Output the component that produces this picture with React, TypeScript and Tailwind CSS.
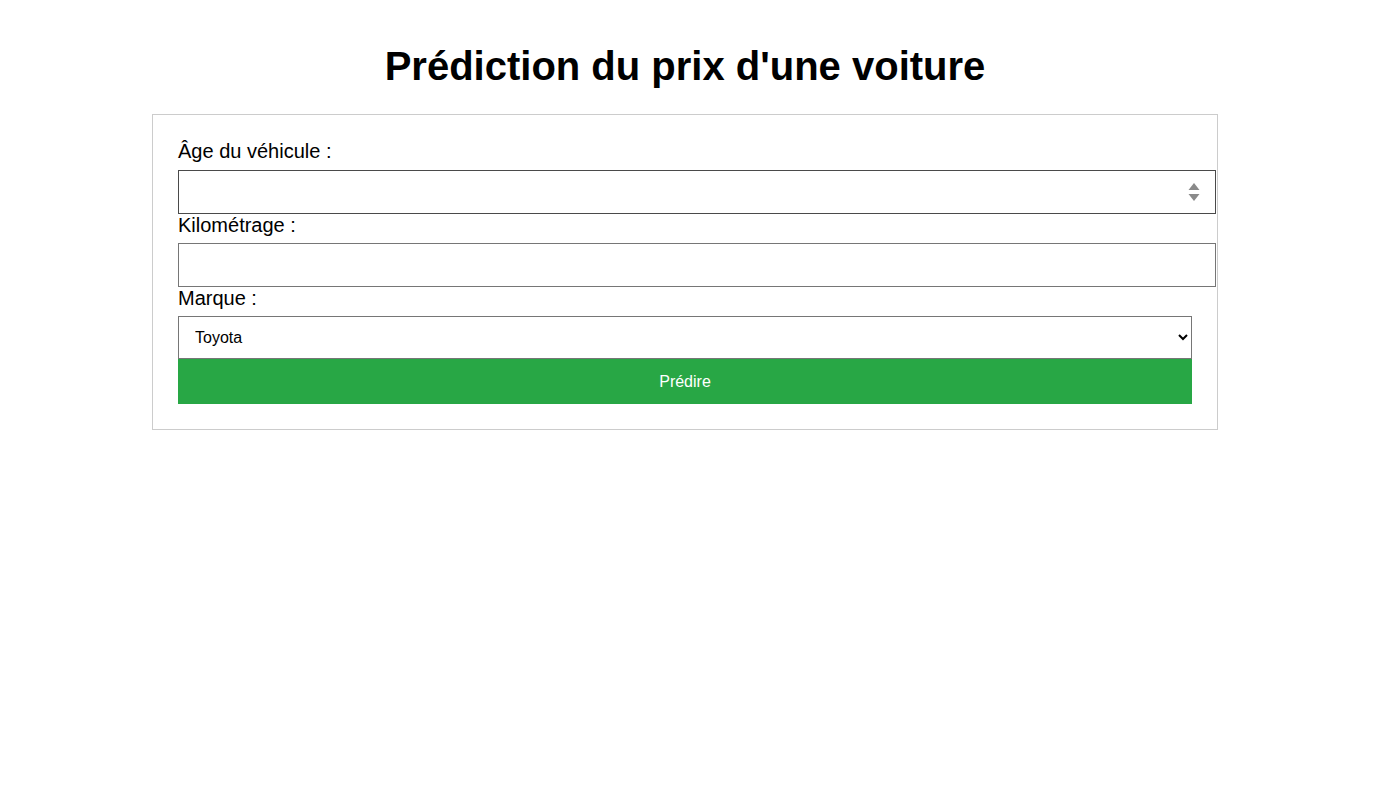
import React from "react";

const SpinArrows = () => (
  <svg viewBox="0 0 12 20" className="w-[12px] h-[20px]" fill="#8a8a8a">
    <path d="M6 1 L11.5 8 H0.5 Z" />
    <path d="M6 19 L11.5 12 H0.5 Z" />
  </svg>
);

const App = () => {
  return (
    <div className="min-h-screen bg-white text-black font-['Liberation_Sans',Arial,sans-serif]">
      <div className="w-[1370px] pt-[20px]">
        <h1 className="text-center text-[40px] leading-[46px] font-bold mt-[23px] mb-[25px]">
          Prédiction du prix d'une voiture
        </h1>

        {/* Form card */}
        <form className="w-[1066px] mx-auto border border-[#cccccc] p-[25px]">
          <label className="block text-[20px] leading-[23px]">Âge du véhicule :</label>
          <div className="relative mt-[7px] w-[1038px]">
            <input
              type="text"
              className="block w-full h-[44px] border border-[#4a4a4a] bg-white px-[11px] text-[16px] outline-none"
            />
            <div className="absolute right-[16px] top-[12px]">
              <SpinArrows />
            </div>
          </div>

          <label className="block text-[20px] leading-[23px]">Kilométrage :</label>
          <input
            type="text"
            className="block mt-[6px] w-[1038px] h-[44px] border border-[#767676] bg-white px-[11px] text-[16px] outline-none"
          />

          <label className="block text-[20px] leading-[23px]">Marque :</label>
          <select
            defaultValue="Toyota"
            className="block mt-[6px] w-full h-[43px] border border-[#767676] bg-white pl-[12px] pr-[8px] text-[16px] outline-none appearance-auto"
          >
            <option>Toyota</option>
            <option>Renault</option>
            <option>Peugeot</option>
            <option>BMW</option>
          </select>

          <button
            type="button"
            className="block w-full h-[45px] bg-[#28a745] text-white text-[16px]"
          >
            Prédire
          </button>
        </form>
      </div>
    </div>
  );
};

export default App;
